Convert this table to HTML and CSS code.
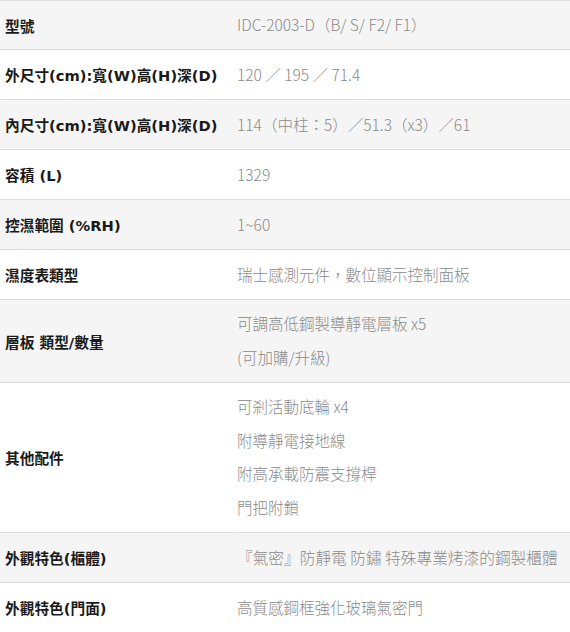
FILE: index.html
```html
<!DOCTYPE html>
<html lang="zh-Hant">
<head>
<meta charset="utf-8">
<link rel="stylesheet" href="styles.css">
</head>
<body>
<div class="spec">
  <div class="row alt first">
    <div class="label">型號</div>
    <div class="val">IDC-2003-D（B/ S/ F2/ F1）</div>
  </div>
  <div class="row">
    <div class="label">外尺寸(cm):寬(W)高(H)深(D)</div>
    <div class="val">120 ／ 195 ／ 71.4</div>
  </div>
  <div class="row alt">
    <div class="label">內尺寸(cm):寬(W)高(H)深(D)</div>
    <div class="val">114（中柱：5）／51.3（x3）／61</div>
  </div>
  <div class="row">
    <div class="label">容積 (L)</div>
    <div class="val">1329</div>
  </div>
  <div class="row alt">
    <div class="label">控濕範圍 (%RH)</div>
    <div class="val">1~60</div>
  </div>
  <div class="row">
    <div class="label">濕度表類型</div>
    <div class="val">瑞士感測元件，數位顯示控制面板</div>
  </div>
  <div class="row alt">
    <div class="label">層板 類型/數量</div>
    <div class="val multi">
      <div>可調高低鋼製導靜電層板 x5</div>
      <div>(可加購/升級)</div>
    </div>
  </div>
  <div class="row">
    <div class="label">其他配件</div>
    <div class="val multi">
      <div>可剎活動底輪 x4</div>
      <div>附導靜電接地線</div>
      <div>附高承載防震支撐桿</div>
      <div>門把附鎖</div>
    </div>
  </div>
  <div class="row alt">
    <div class="label">外觀特色(櫃體)</div>
    <div class="val big">『氣密』防靜電 防鏽 特殊專業烤漆的鋼製櫃體</div>
  </div>
  <div class="row">
    <div class="label">外觀特色(門面)</div>
    <div class="val">高質感鋼框強化玻璃氣密門</div>
  </div>
</div>
</body>
</html>
```

FILE: styles.css
```css
html, body {
  margin: 0;
  padding: 0;
  background: #ffffff;
}

.spec {
  width: 570px;
  border-top: 1px solid #dcdcdc;
}

.row {
  display: grid;
  grid-template-columns: 237px 1fr;
  align-items: center;
  min-height: 49px;
  border-bottom: 1px solid #dcdcdc;
  background: #ffffff;
}

.row.first {
  min-height: 48px;
}

.row.alt {
  background: #f5f5f5;
}

.label {
  padding-left: 5px;
  font-family: "DejaVu Sans", "Noto Sans CJK TC", sans-serif;
  font-weight: bold;
  font-size: 14.7px;
  color: #1a1a1a;
  white-space: nowrap;
}

.val {
  font-family: "Noto Sans CJK TC", sans-serif;
  font-weight: 300;
  font-size: 15.5px;
  line-height: 25px;
  color: #8a8a8a;
  padding: 12px 0;
  white-space: nowrap;
}

.first .val {
  padding: 11px 0 12px;
}

.val.multi {
  line-height: 33.5px;
  padding: 7px 0 8px;
}

.val.big {
  font-size: 15.7px;
}
```
